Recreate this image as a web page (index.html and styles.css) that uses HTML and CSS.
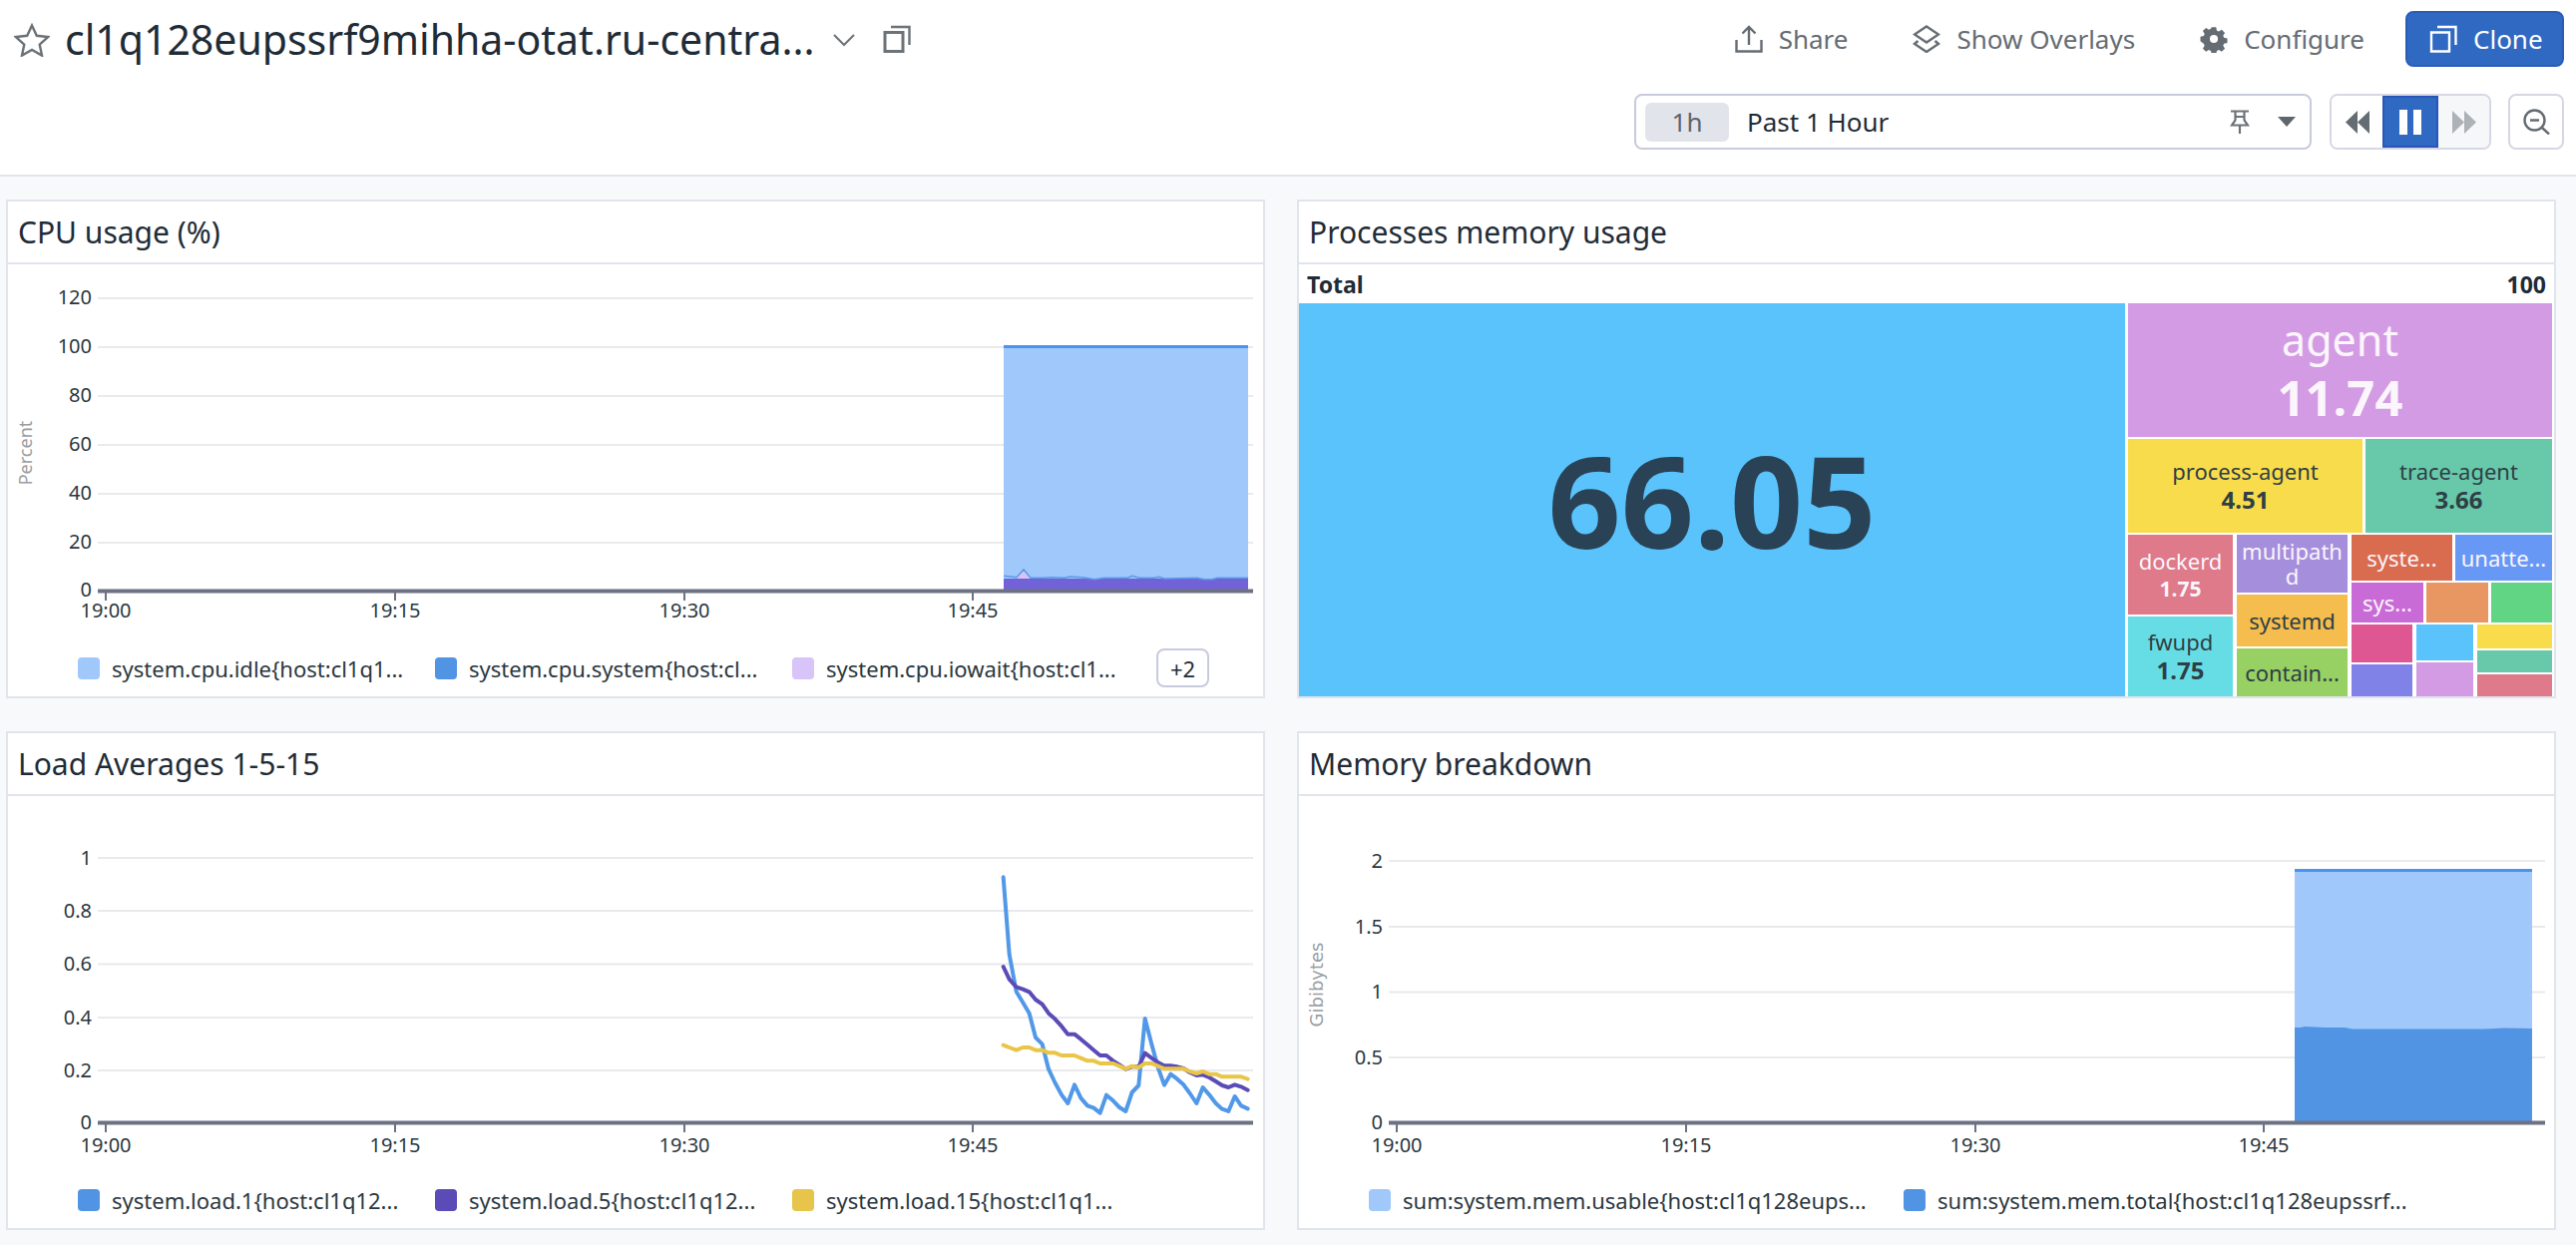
FILE: index.html
```html
<!DOCTYPE html>
<html lang="en">
<head>
<meta charset="utf-8">
<title>Host dashboard</title>
<link rel="stylesheet" href="styles.css">
</head>
<body>
<header class="header">
  <div class="row-top">
    <div class="title-group">
      <svg class="ic-star" viewBox="0 0 36 34"><path d="M18 2.500l4.800 10.300 11.200 1.300-8.300 7.500 2.300 11-10-5.600-10 5.600 2.300-11L2 14.100l11.200-1.300z"/></svg>
      <h1 class="page-title">cl1q128eupssrf9mihha-otat.ru-centra...</h1>
      <svg class="ic-chev" viewBox="0 0 22 13"><path d="M1 1l10 10L21 1"/></svg>
      <svg class="ic-copy" viewBox="0 0 28 28"><path class="front" d="M2 7.500h18v19H2z"/><path d="M8 2h18.500v18"/></svg>
    </div>
    <nav class="actions">
      <button class="act"><svg class="ic" viewBox="0 0 28 28"><path d="M1.500 15v11.500h25V15M14 20V2M7.500 8.500L14 2l6.500 6.500"/></svg>Share</button>
      <button class="act"><svg class="ic" viewBox="0 0 28 28"><path d="M14 1.500L26 9.500 14 17.500 2 9.500zM5.500 16L2 19 14 27 26 19l-3.500-3"/></svg>Show Overlays</button>
      <button class="act"><svg class="ic ic-gear" viewBox="0 0 28 28"><path d="M11.500 1h5l.8 3.700 2.300 1 3.200-2 3.500 3.500-2 3.200 1 2.300 3.700.8v5l-3.700.8-1 2.300 2 3.200-3.500 3.500-3.200-2-2.300 1-.8 3.700h-5l-.8-3.700-2.300-1-3.200 2-3.500-3.500 2-3.200-1-2.300L-1 16.500v-5l3.700-.8 1-2.300-2-3.200 3.500-3.500 3.200 2 2.300-1zM14 9.500a4.500 4.500 0 100 9 4.500 4.500 0 000-9z" transform="translate(1.400 1.400) scale(.9)"/></svg>Configure</button>
      <button class="clone"><svg class="ic" viewBox="0 0 28 28"><path d="M2 7.500h18v19H2zM8 2h18.500v18"/></svg>Clone</button>
    </nav>
  </div>
  <div class="row-time">
    <div class="time-select">
      <span class="chip">1h</span>
      <span class="time-label">Past 1 Hour</span>
      <svg class="ic-pin" viewBox="0 0 20 24"><path d="M1 1.500h18M4.500 7h11M5.500 1.500v9L2 15.500h16L14.500 10.500v-9M10 15.500V24"/></svg>
      <svg class="ic-caret" viewBox="0 0 18 10"><path d="M0 0h18L9 10z"/></svg>
    </div>
    <div class="player">
      <button class="pl pl-back"><svg viewBox="0 0 24 23"><path d="M12 0v23L0 11.500zM24 0v23L12 11.500z"/></svg></button>
      <button class="pl pl-pause"><svg viewBox="0 0 22 25"><path d="M0 0h8v25H0zM14 0h8v25h-8z"/></svg></button>
      <button class="pl pl-fwd"><svg viewBox="0 0 24 23"><path d="M0 0v23l12-11.500zM12 0v23l12-11.500z"/></svg></button>
    </div>
    <button class="zoom-btn"><svg viewBox="0 0 27 26"><circle cx="11.500" cy="11.500" r="10"/><path d="M7 11.500h9M19 19l7 6.500"/></svg></button>
  </div>
</header>

<main class="grid">
  <section class="card">
    <h2 class="card-title">CPU usage (%)</h2>
    <svg class="chart" width="1258" height="376" viewBox="8 265 1258 376">
      <g class="grid-lines">
        <path d="M98 299H1256M98 348H1256M98 397H1256M98 446H1256M98 495H1256M98 544H1256"/>
      </g>
      <path class="a-light" d="M1006 348H1251V592H1006z"/>
      <path class="a-top" d="M1006 347.500H1251"/>
      <path class="a-lilac" d="M1019 580L1026 571L1033 580z"/>
      <path class="a-purple" d="M1006 580H1251V592H1006z"/>
      <polyline class="a-thin" points="1006,577.300 1019,578.700 1026,571 1033,579.300 1047,579.300 1053,578.700 1067,579.300 1072,578 1085,578.700 1097,580.700 1107,579.300 1130,579.300 1135,577.300 1142,579.300 1157,579.300 1162,578.300 1167,580 1200,579.300 1207,580.700 1215,580.700 1220,579.300 1251,579.300"/>
      <path class="axis" d="M98 592.500H1256"/>
      <path class="tick" d="M106 593V602M396 593V602M686 593V602M975 593V602"/>
      <g class="y-labels">
        <text x="92" y="305">120</text><text x="92" y="354">100</text><text x="92" y="403">80</text><text x="92" y="452">60</text><text x="92" y="501">40</text><text x="92" y="550">20</text><text x="92" y="598">0</text>
      </g>
      <g class="x-labels">
        <text x="106" y="619">19:00</text><text x="396" y="619">19:15</text><text x="686" y="619">19:30</text><text x="975" y="619">19:45</text>
      </g>
      <text class="y-title" transform="translate(32 454) rotate(-90)">Percent</text>
    </svg>
    <div class="legend">
      <div class="lg-item"><i class="sw sw-light"></i>system.cpu.idle{host:cl1q1...</div>
      <div class="lg-item"><i class="sw sw-blue"></i>system.cpu.system{host:cl...</div>
      <div class="lg-item"><i class="sw sw-lilac"></i>system.cpu.iowait{host:cl1...</div>
      <button class="more">+2</button>
    </div>
  </section>

  <section class="card">
    <h2 class="card-title">Processes memory usage</h2>
    <div class="total"><b>Total</b><b>100</b></div>
    <div class="tm">
      <div class="cell big c-sky"><b class="v-big">66.05</b></div>
      <div class="tm-col col-right">
        <div class="cell agent c-lilac light"><span class="n-l">agent</span><b class="v-l">11.74</b></div>
        <div class="tm-row r-mid">
          <div class="cell proc c-yellow"><span>process-agent</span><b class="v-m">4.51</b></div>
          <div class="cell trace c-teal"><span>trace-agent</span><b class="v-m">3.66</b></div>
        </div>
        <div class="tm-row r-low">
          <div class="tm-col col-a">
            <div class="cell dock c-red light"><span>dockerd</span><b class="v-s">1.75</b></div>
            <div class="cell fw c-cyan"><span>fwupd</span><b class="v-m">1.75</b></div>
          </div>
          <div class="tm-col col-b">
            <div class="cell multi c-purple light"><span class="wrap">multipath<br>d</span></div>
            <div class="cell sysd c-amber"><span>systemd</span></div>
            <div class="cell cont c-green"><span>contain...</span></div>
          </div>
          <div class="tm-col col-c">
            <div class="tm-row c1">
              <div class="cell s1 c-rust light"><span>syste...</span></div>
              <div class="cell s2 c-blue light"><span>unatte...</span></div>
            </div>
            <div class="tm-row c2">
              <div class="cell s3 c-magenta light"><span>sys...</span></div>
              <div class="cell s4 c-orange"></div>
              <div class="cell s5 c-mint"></div>
            </div>
            <div class="tm-row c3">
              <div class="tm-col t1">
                <div class="cell p1 c-pink"></div>
                <div class="cell p2 c-indigo"></div>
              </div>
              <div class="tm-col t2">
                <div class="cell q1 c-sky"></div>
                <div class="cell q2 c-lilac"></div>
              </div>
              <div class="tm-col t3">
                <div class="cell r1 c-yellow"></div>
                <div class="cell r2 c-teal"></div>
                <div class="cell r3 c-red"></div>
              </div>
            </div>
          </div>
        </div>
      </div>
    </div>
  </section>

  <section class="card">
    <h2 class="card-title">Load Averages 1-5-15</h2>
    <svg class="chart" width="1258" height="376" viewBox="8 798 1258 376">
      <g class="grid-lines">
        <path d="M98 860H1256M98 913H1256M98 966.500H1256M98 1020H1256M98 1073H1256"/>
      </g>
      <g transform="translate(960 860) scale(.33333)">
        <polyline class="ln ln-blue" points="137,58 155,290 176,402 196,435 215,467 234,540 254,560 273,635 292,675 312,712 331,738 351,682 370,722 390,745 409,752 428,767 447,713 467,730 486,750 505,762 524,705 544,684 563,483 583,560 602,630 621,683 640,650 660,665 679,682 698,708 718,738 737,690 756,712 776,738 795,755 814,762 833,717 852,745 872,754"/>
        <polyline class="ln ln-purple" points="137,327 155,365 176,388 196,395 215,403 234,426 254,440 273,467 292,484 312,506 331,530 351,530 370,545 390,562 409,578 428,594 447,594 467,610 486,622 505,635 524,628 544,628 563,587 583,602 602,615 621,625 640,625 660,628 679,633 698,645 718,654 737,652 756,660 776,672 795,684 814,690 833,682 852,688 872,698"/>
        <polyline class="ln ln-yellow" points="137,563 155,570 176,578 196,570 215,570 234,578 254,578 273,586 292,586 312,594 331,594 351,594 370,602 390,610 409,610 428,618 447,618 467,618 486,626 505,634 524,626 544,630 563,618 583,618 602,626 621,634 640,634 660,634 679,634 698,642 718,648 737,642 756,650 776,650 795,658 814,658 833,658 852,658 872,665"/>
      </g>
      <path class="axis" d="M98 1125.500H1256"/>
      <path class="tick" d="M106 1126V1135M396 1126V1135M686 1126V1135M975 1126V1135"/>
      <g class="y-labels">
        <text x="92" y="867">1</text><text x="92" y="920">0.8</text><text x="92" y="973">0.6</text><text x="92" y="1027">0.4</text><text x="92" y="1080">0.2</text><text x="92" y="1132">0</text>
      </g>
      <g class="x-labels">
        <text x="106" y="1155">19:00</text><text x="396" y="1155">19:15</text><text x="686" y="1155">19:30</text><text x="975" y="1155">19:45</text>
      </g>
    </svg>
    <div class="legend">
      <div class="lg-item"><i class="sw sw-blue"></i>system.load.1{host:cl1q12...</div>
      <div class="lg-item"><i class="sw sw-violet"></i>system.load.5{host:cl1q12...</div>
      <div class="lg-item"><i class="sw sw-gold"></i>system.load.15{host:cl1q1...</div>
    </div>
  </section>

  <section class="card">
    <h2 class="card-title">Memory breakdown</h2>
    <svg class="chart" width="1258" height="376" viewBox="1302 798 1258 376">
      <g class="grid-lines">
        <path d="M1392 863H2551M1392 929H2551M1392 994.500H2551M1392 1060H2551"/>
      </g>
      <path class="a-light" d="M2300 872H2538V1125H2300z"/>
      <path class="a-top" d="M2300 872.500H2538"/>
      <path class="a-blue" d="M2300 1030L2306 1030 2310 1029 2330 1030 2350 1030 2358 1031.500 2400 1031.500 2450 1031.500 2490 1031.500 2510 1030.500 2538 1031V1125H2300z"/>
      <path class="axis" d="M1392 1125.500H2551"/>
      <path class="tick" d="M1400 1126V1135M1690 1126V1135M1980 1126V1135M2269 1126V1135"/>
      <g class="y-labels">
        <text x="1386" y="870">2</text><text x="1386" y="936">1.5</text><text x="1386" y="1001">1</text><text x="1386" y="1067">0.5</text><text x="1386" y="1132">0</text>
      </g>
      <g class="x-labels">
        <text x="1400" y="1155">19:00</text><text x="1690" y="1155">19:15</text><text x="1980" y="1155">19:30</text><text x="2269" y="1155">19:45</text>
      </g>
      <text class="y-title alt" transform="translate(1326 987) rotate(-90)">Gibibytes</text>
    </svg>
    <div class="legend">
      <div class="lg-item wide"><i class="sw sw-light"></i>sum:system.mem.usable{host:cl1q128eups...</div>
      <div class="lg-item wide"><i class="sw sw-blue"></i>sum:system.mem.total{host:cl1q128eupssrf...</div>
    </div>
  </section>
</main>
</body>
</html>
```

FILE: styles.css
```css
* { box-sizing: border-box; }
html, body { margin: 0; padding: 0; }
body {
  width: 2582px;
  height: 1248px;
  overflow: hidden;
  background: #f8f9fb;
  color: #1f2c37;
  font-family: "Noto Sans", "Open Sans", sans-serif;
}
button { font-family: inherit; cursor: pointer; }

/* header */
.header {
  height: 177px;
  background: #fff;
  border-bottom: 2px solid #e2e5ec;
  padding: 11px 12px 0 14px;
}
.row-top { display: flex; justify-content: space-between; align-items: center; height: 56px; }
.title-group { display: flex; align-items: center; }
.ic-star { width: 36px; height: 34px; fill: none; stroke: #6b7278; stroke-width: 2.400; margin-right: 15px; margin-top: 2px; }
.page-title { margin: 0; font-size: 41px; font-weight: 400; line-height: 52px; color: #1f2c37; white-space: nowrap; }
.ic-chev { width: 22px; height: 13px; fill: none; stroke: #6b7278; stroke-width: 2; margin-left: 19px; margin-top: 2px; }
.ic-copy { width: 28px; height: 28px; fill: none; stroke: #6b7278; stroke-width: 2.400; margin-left: 28px; }
.ic-copy .front { stroke-width: 3; }
.actions { display: flex; align-items: center; gap: 17px; }
.act {
  display: flex; align-items: center; gap: 16px;
  height: 56px; padding: 0 24px;
  border: 0; background: transparent;
  color: #656c73; font-size: 26px;
}
.ic { width: 28px; height: 28px; fill: none; stroke: currentColor; stroke-width: 2.400; flex: none; }
.ic-gear { fill: #656c73; stroke: none; fill-rule: evenodd; }
.clone {
  display: flex; align-items: center; gap: 16px;
  width: 159px; height: 56px; padding: 0 0 0 22px;
  background: #2f69c2; border: 2px solid #2a5db8; border-radius: 8px;
  color: #fff; font-size: 26px;
}
.row-time { display: flex; justify-content: flex-end; align-items: center; margin-top: 27px; height: 56px; }
.time-select {
  display: flex; align-items: center;
  width: 679px; height: 56px; padding: 0 14px 0 9px;
  border: 2px solid #c8cbdd; border-radius: 8px; background: #fff;
}
.chip {
  width: 84px; height: 39px; margin-right: 18px;
  background: #e2e4ec; border-radius: 6px;
  color: #5e646b; font-size: 26px; line-height: 39px; text-align: center;
}
.time-label { flex: 1; font-size: 26px; color: #1f2c37; }
.ic-pin { width: 20px; height: 24px; fill: none; stroke: #6b7278; stroke-width: 2.200; margin-right: 28px; }
.ic-caret { width: 18px; height: 10px; fill: #5f666c; }
.player {
  display: flex; width: 162px; height: 56px; margin-left: 18px;
  border: 2px solid #d5d8e4; border-radius: 8px; overflow: hidden; background: #fff;
}
.pl { display: flex; align-items: center; justify-content: center; padding: 0; border: 0; height: 100%; }
.pl-back { width: 51px; background: #fff; }
.pl-back svg { width: 24px; height: 23px; fill: #656c73; }
.pl-pause { width: 56px; background: #2f69c2; outline: 2px solid #2a55b8; outline-offset: -2px; }
.pl-pause svg { width: 22px; height: 25px; fill: #fff; }
.pl-fwd { flex: 1; background: #f6f7f9; }
.pl-fwd svg { width: 24px; height: 23px; fill: #adb2b6; }
.zoom-btn {
  display: flex; align-items: center; justify-content: center;
  width: 56px; height: 56px; margin-left: 17px; padding: 0;
  border: 2px solid #d5d8e4; border-radius: 8px; background: #fff;
}
.zoom-btn svg { width: 27px; height: 26px; fill: none; stroke: #656c73; stroke-width: 2.400; }

/* dashboard */
.grid {
  display: grid;
  grid-template-columns: 1262px 1262px;
  grid-template-rows: 500px 500px;
  column-gap: 32px;
  row-gap: 33px;
  padding: 23px 0 0 6px;
}
.card { display: flex; flex-direction: column; background: #fff; border: 2px solid #e2e4ec; overflow: hidden; }
.card-title {
  margin: 0; height: 63px; padding: 0 0 0 10px;
  border-bottom: 2px solid #e2e4ec;
  font-size: 30px; font-weight: 400; line-height: 61px; color: #1f2c37;
}
.chart { display: block; flex: none; }
.grid-lines path { stroke: #e9eaee; stroke-width: 2; fill: none; }
.axis { stroke: #6c7184; stroke-width: 4; fill: none; }
.tick { stroke: #6c7184; stroke-width: 2; fill: none; }
.y-labels text { text-anchor: end; font-size: 20px; fill: #2b3740; }
.x-labels text { text-anchor: middle; font-size: 20px; fill: #2b3740; }
.y-title { text-anchor: middle; font-size: 18px; fill: #9a9ea3; }
.y-title.alt { font-family: "DejaVu Sans", sans-serif; font-size: 18px; }
.a-light { fill: #a0c8fa; }
.a-top { stroke: #4a93f0; stroke-width: 3; fill: none; }
.a-lilac { fill: #d8c4f6; }
.a-purple { fill: #7262d8; }
.a-blue { fill: #5294e4; }
.a-thin { stroke: #5a9be9; stroke-width: 1.500; fill: none; }
.ln { fill: none; stroke-width: 12; stroke-linejoin: round; stroke-linecap: round; }
.ln-blue { stroke: #5198e8; }
.ln-purple { stroke: #5b4bb6; }
.ln-yellow { stroke: #e9c548; }

.legend { display: flex; align-items: center; flex: 1; padding-left: 70px; }
.lg-item { display: flex; align-items: center; width: 358px; font-size: 22px; color: #2b3740; white-space: nowrap; }
.lg-item.wide { width: 536px; }
.sw { flex: none; width: 22px; height: 22px; margin-right: 12px; border-radius: 4px; }
.sw-light { background: #a0c8fa; }
.sw-blue { background: #5294e4; }
.sw-lilac { background: #d8c4f8; }
.sw-violet { background: #5b4bb6; }
.sw-gold { background: #e7c44a; }
.more {
  width: 53px; height: 39px; margin-left: 7px; padding: 0;
  border: 2px solid #c8cbdd; border-radius: 8px; background: #fff;
  color: #1f2c37; font-size: 22px;
}

/* treemap */
.total {
  display: flex; justify-content: space-between; align-items: center;
  height: 39px; padding: 0 8px;
  font-size: 23px; color: #1f2c37;
}
.tm { display: flex; gap: 3px; height: 394px; }
.tm-col { display: flex; flex-direction: column; gap: 2px; }
.tm-row { display: flex; }
.cell {
  display: flex; flex-direction: column; align-items: center; justify-content: center;
  overflow: hidden; color: #2f3f46; font-size: 22px; line-height: 28px; text-align: center;
}
.cell b { font-weight: 700; }
.cell.light { color: #fbf5fc; }
.big { width: 828px; height: 394px; }
.v-big { font-size: 128px; line-height: 130px; color: #2a4256; }
.col-right { width: 425px; height: 394px; }
.agent { height: 134px; }
.n-l { font-size: 43px; line-height: 54px; }
.v-l { font-size: 49px; line-height: 60px; }
.v-m { font-size: 24px; line-height: 30px; }
.v-s { font-size: 21px; line-height: 28px; }
.r-mid { gap: 3px; height: 94px; }
.proc { width: 235px; }
.trace { width: 187px; }
.r-low { gap: 4px; height: 162px; }
.col-a { width: 105px; }
.dock { height: 80px; }
.fw { height: 80px; }
.col-b { width: 111px; }
.multi { height: 58px; }
.wrap { line-height: 25px; }
.sysd { height: 52px; }
.cont { height: 48px; }
.col-c { width: 201px; }
.c1 { gap: 3px; height: 46px; }
.s1 { width: 101px; }
.s2 { width: 97px; }
.c2 { gap: 3px; height: 40px; }
.s3 { width: 72px; }
.s4 { width: 62px; }
.s5 { width: 61px; }
.c3 { gap: 4px; height: 72px; }
.t1 { width: 61px; }
.t2 { width: 57px; }
.t3 { width: 75px; }
.p1 { height: 38px; }
.p2 { height: 32px; }
.q1 { height: 36px; }
.q2 { height: 34px; }
.r1 { height: 24px; }
.r2 { height: 22px; }
.r3 { height: 22px; }
.c-sky { background: #5ac3fb; }
.c-lilac { background: #d49be5; }
.c-yellow { background: #f9dc4b; }
.c-teal { background: #67c9aa; }
.c-red { background: #de7a8a; }
.c-cyan { background: #66dde5; }
.c-purple { background: #a58fdc; }
.c-amber { background: #f5bd4d; }
.c-green { background: #97d063; }
.c-rust { background: #d96b4e; }
.c-blue { background: #6898f6; }
.c-magenta { background: #c96bd6; }
.c-orange { background: #e89662; }
.c-mint { background: #62d585; }
.c-pink { background: #de5792; }
.c-indigo { background: #8082e8; }
```
